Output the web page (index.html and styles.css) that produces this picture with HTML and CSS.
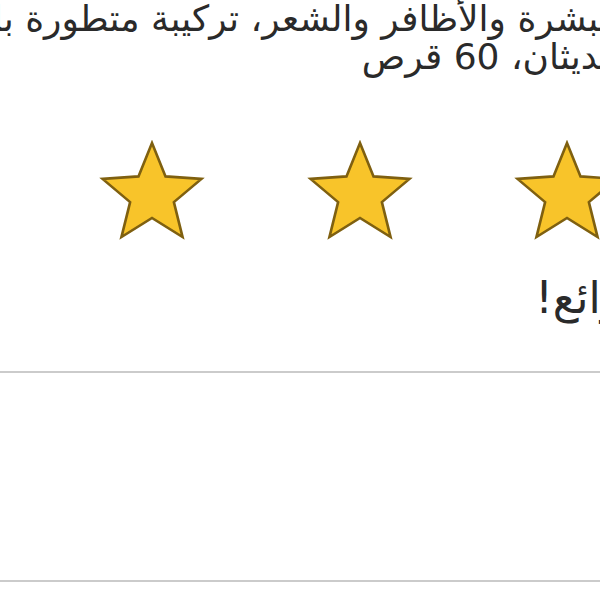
FILE: index.html
```html
<!DOCTYPE html>
<html lang="ar">
<head>
<meta charset="utf-8">
<title>تقييم المنتج</title>
<link rel="stylesheet" href="styles.css">
</head>
<body>
<main class="review" dir="rtl">
  <h1 class="product-title">للبشرة والأظافر والشعر، تركيبة متطورة بالكولاجين والبيوتين والزنك<br>حديثان، 60 قرص</h1>

  <div class="stars" aria-label="5 من 5">
    <svg class="star" viewBox="0 0 110 100" width="110" height="100"><path d="M55 3 L68.52 36.39 L104.46 38.93 L76.88 62.11 L85.56 97.07 L55 78 L24.44 97.07 L33.12 62.11 L5.54 38.93 L41.48 36.39 Z"/></svg>
    <svg class="star" viewBox="0 0 110 100" width="110" height="100"><path d="M55 3 L68.52 36.39 L104.46 38.93 L76.88 62.11 L85.56 97.07 L55 78 L24.44 97.07 L33.12 62.11 L5.54 38.93 L41.48 36.39 Z"/></svg>
    <svg class="star" viewBox="0 0 110 100" width="110" height="100"><path d="M55 3 L68.52 36.39 L104.46 38.93 L76.88 62.11 L85.56 97.07 L55 78 L24.44 97.07 L33.12 62.11 L5.54 38.93 L41.48 36.39 Z"/></svg>
    <svg class="star" viewBox="0 0 110 100" width="110" height="100"><path d="M55 3 L68.52 36.39 L104.46 38.93 L76.88 62.11 L85.56 97.07 L55 78 L24.44 97.07 L33.12 62.11 L5.54 38.93 L41.48 36.39 Z"/></svg>
    <svg class="star" viewBox="0 0 110 100" width="110" height="100"><path d="M55 3 L68.52 36.39 L104.46 38.93 L76.88 62.11 L85.56 97.07 L55 78 L24.44 97.07 L33.12 62.11 L5.54 38.93 L41.48 36.39 Z"/></svg>
  </div>

  <p class="comment">رائع!</p>

  <hr class="divider">
  <div class="section"></div>
  <hr class="divider">
</main>
</body>
</html>
```
FILE: styles.css
```css
html, body {
  margin: 0;
  padding: 0;
  background: #ffffff;
  overflow: hidden;
}

body {
  font-family: "DejaVu Sans", sans-serif;
  color: #2a2a2a;
}

.review {
  direction: rtl;
  width: 1400px;
  margin-left: -778px;
}

.product-title {
  margin: 0;
  font-size: 36px;
  line-height: 38px;
  font-weight: normal;
  text-align: right;
  white-space: nowrap;
}

.stars {
  display: flex;
  gap: 97.5px;
  margin-top: 64px;
  height: 100px;
}

.star {
  flex: none;
  display: block;
}

.star path {
  fill: #f8c42a;
  stroke: #7f6010;
  stroke-width: 2.6;
  stroke-linejoin: miter;
}

.comment {
  margin: 34px 0 0;
  font-size: 44px;
  line-height: 48px;
  text-align: right;
}

.divider {
  margin: 49px 0 0;
  height: 2px;
  border: none;
  background: #cbcbcb;
}

.section {
  height: 207px;
}

.divider + .section + .divider {
  margin-top: 0;
}
```
